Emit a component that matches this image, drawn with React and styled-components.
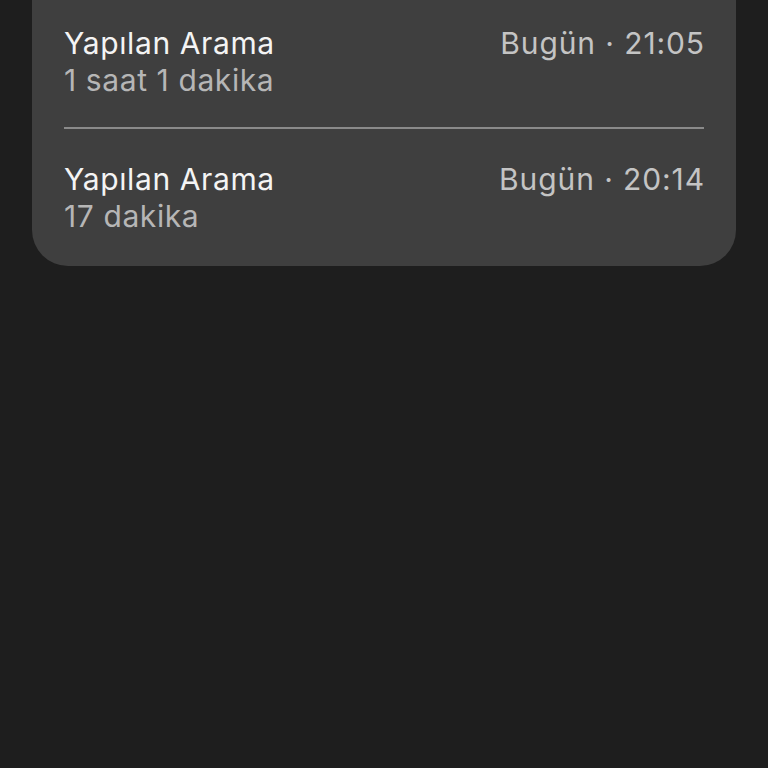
import React from "react";
import styled, { createGlobalStyle } from "styled-components";

const GlobalStyle = createGlobalStyle`
  html, body {
    margin: 0;
    padding: 0;
    background: #1e1e1e;
  }
  body {
    font-family: Inter, "Noto Sans", sans-serif;
    -webkit-font-smoothing: antialiased;
  }
`;

const calls = [
  { title: "Yapılan Arama", duration: "1 saat 1 dakika", time: "Bugün · 21:05" },
  { title: "Yapılan Arama", duration: "17 dakika", time: "Bugün · 20:14" },
];

const App = () => {
  return (
    <Page>
      <GlobalStyle />
      <Card>
        {calls.map((call, i) => (
          <Row key={i} first={i === 0}>
            <Info>
              <Title>{call.title}</Title>
              <Duration>{call.duration}</Duration>
            </Info>
            <Time>{call.time}</Time>
          </Row>
        ))}
      </Card>
    </Page>
  );
};

const Page = styled.div`
  min-height: 768px;
  background: #1e1e1e;
  padding: 0 32px;
  box-sizing: border-box;
`;

const Card = styled.div`
  background: #3f3f3f;
  border-radius: 0 0 36px 36px;
  padding: 0 32px 0 32px;
`;

const Row = styled.div`
  display: flex;
  justify-content: space-between;
  align-items: flex-start;
  padding: ${(p) => (p.first ? "25px 0 28px" : "32px 0 31px")};
  border-top: ${(p) => (p.first ? "none" : "2px solid #8a8a8a")};
`;

const Info = styled.div`
  display: flex;
  flex-direction: column;
`;

const Text = styled.span`
  font-size: 30px;
  line-height: 37px;
  letter-spacing: 0.6px;
  white-space: nowrap;
`;

const Title = styled(Text)`
  color: #f4f4f4;
`;

const Duration = styled(Text)`
  color: #b6b6b6;
`;

const Time = styled(Text)`
  color: #c4c4c4;
  letter-spacing: 0.9px;
  margin-right: -1px;
`;

export default App;
